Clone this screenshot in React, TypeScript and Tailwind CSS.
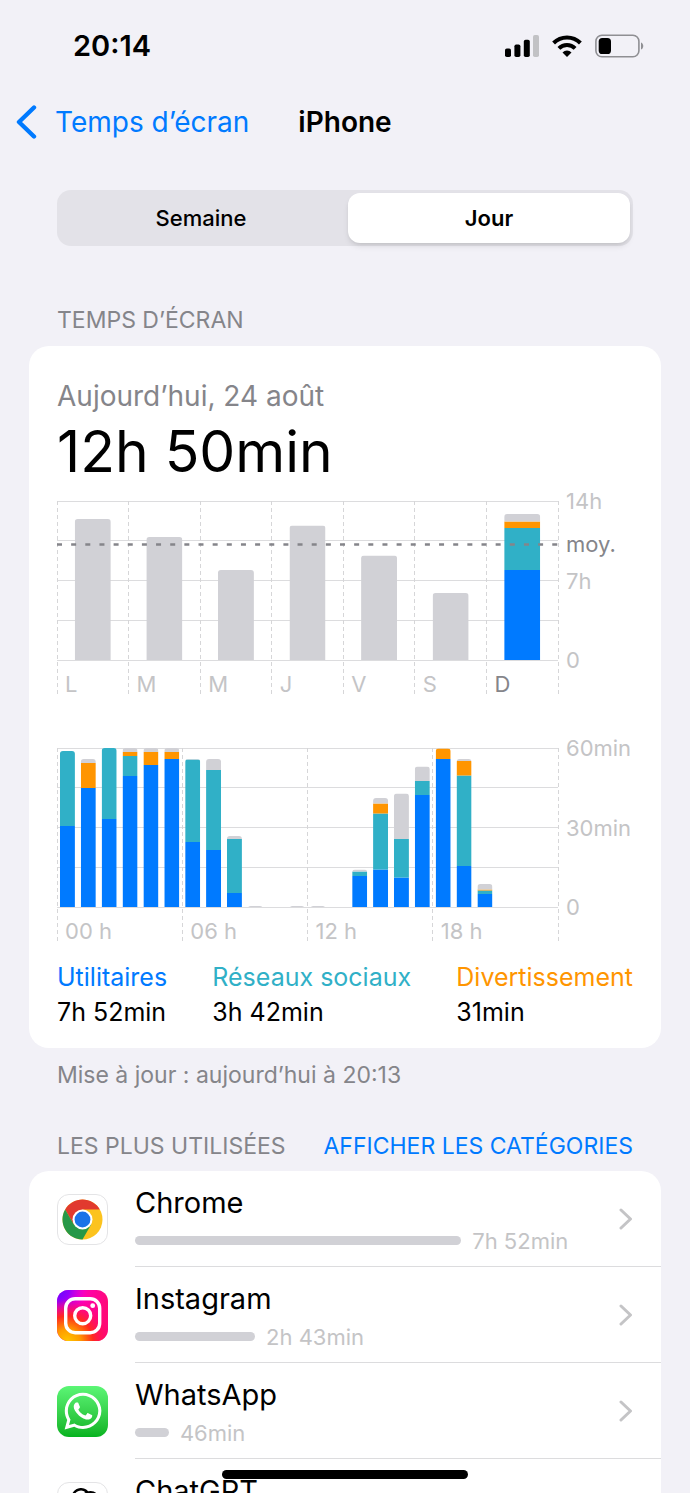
import { useState } from 'react'
import type { ReactNode } from 'react'
import { FaWhatsapp } from 'react-icons/fa'
import { SiOpenai } from 'react-icons/si'

const BLUE = '#007aff'
const TEAL = '#30b0c7'
const ORANGE = '#ff9500'
const GRAY = '#d1d1d6'

// utilities, social, entertainment, other
const SEGMENT_COLORS = [BLUE, TEAL, ORANGE, GRAY]

const PLOT_WIDTH = 501
const PLOT_TOP = 11
const PLOT_BOTTOM = 170

interface Bar {
  slot: number
  segments: number[]
}

const weekBars: Bar[] = [
  { slot: 0, segments: [0, 0, 0, 141] },
  { slot: 1, segments: [0, 0, 0, 123] },
  { slot: 2, segments: [0, 0, 0, 90] },
  { slot: 3, segments: [0, 0, 0, 134.5] },
  { slot: 4, segments: [0, 0, 0, 104.5] },
  { slot: 5, segments: [0, 0, 0, 67] },
  { slot: 6, segments: [90, 42, 6.5, 7.5] },
]

const hourBars: Bar[] = [
  { slot: 0, segments: [81, 75, 0, 0] },
  { slot: 1, segments: [119, 0, 25, 4] },
  { slot: 2, segments: [88, 71, 0, 0] },
  { slot: 3, segments: [131, 20, 4, 4] },
  { slot: 4, segments: [142, 0, 13, 4] },
  { slot: 5, segments: [148, 0, 7, 4] },
  { slot: 6, segments: [65, 82.5, 0, 0.5] },
  { slot: 7, segments: [57, 80, 0, 11] },
  { slot: 8, segments: [14, 54, 0, 3] },
  { slot: 9, segments: [0, 0, 0, 1] },
  { slot: 11, segments: [0, 0, 0, 1] },
  { slot: 12, segments: [0, 0, 0, 1] },
  { slot: 14, segments: [31, 4.5, 0, 2] },
  { slot: 15, segments: [37.5, 56, 10, 5.5] },
  { slot: 16, segments: [29.5, 38.5, 0, 45.5] },
  { slot: 17, segments: [112, 14, 0, 14.5] },
  { slot: 18, segments: [148, 0, 10.5, 0] },
  { slot: 19, segments: [41, 90.5, 14.5, 2] },
  { slot: 20, segments: [13, 3.5, 1, 5.5] },
]

const categories = [
  { name: 'Utilitaires', time: '7h 52min', color: 'text-[#007aff]' },
  { name: 'Réseaux sociaux', time: '3h 42min', color: 'text-[#30b0c7]' },
  { name: 'Divertissement', time: '31min', color: 'text-[#ff9500]' },
]

interface ChartProps {
  id: string
  label: string
  columns: string[]
  activeColumn?: number
  yLabels: string[]
  bars: Bar[]
  slots: number
  barWidth: number
  average?: number
}

function Chart({ id, label, columns, activeColumn, yLabels, bars, slots, barWidth, average }: ChartProps) {
  const columnWidth = PLOT_WIDTH / columns.length
  const slotWidth = PLOT_WIDTH / slots
  const rowHeight = (PLOT_BOTTOM - PLOT_TOP) / 4

  return (
    <svg viewBox="0 0 576 210" role="img" aria-label={label} className="block w-full overflow-visible text-[22px]">
      {[0, 1, 2, 3, 4].map((row) => (
        <line
          key={row}
          x1={0}
          x2={PLOT_WIDTH}
          y1={Math.floor(PLOT_TOP + row * rowHeight) + 0.5}
          y2={Math.floor(PLOT_TOP + row * rowHeight) + 0.5}
          stroke="#dcdcde"
        />
      ))}
      {[...columns, ''].map((_, i) => (
        <line
          key={i}
          x1={Math.floor(i * columnWidth) + 0.5}
          x2={Math.floor(i * columnWidth) + 0.5}
          y1={PLOT_TOP}
          y2={206}
          stroke="#d6d6d8"
          strokeDasharray="4 3"
        />
      ))}
      {bars.map(({ slot, segments }) => {
        const x = slot * slotWidth + (slotWidth - barWidth) / 2
        const height = segments.reduce((a, b) => a + b, 0)
        let y = PLOT_BOTTOM
        return (
          <g key={slot} clipPath={`url(#${id}-${slot})`}>
            <clipPath id={`${id}-${slot}`}>
              <rect x={x} y={PLOT_BOTTOM - height} width={barWidth} height={height + 8} rx={3} />
            </clipPath>
            {segments.map((h, i) => {
              y -= h
              return <rect key={i} x={x} y={y} width={barWidth} height={h} fill={SEGMENT_COLORS[i]} />
            })}
          </g>
        )
      })}
      {average !== undefined && (
        <line
          x1={0}
          x2={PLOT_WIDTH}
          y1={average}
          y2={average}
          stroke="#85858a"
          strokeWidth={2.6}
          strokeDasharray="5 9.15"
        />
      )}
      {columns.map((text, i) => (
        <text key={i} x={i * columnWidth + 8} y={202} fill={i === activeColumn ? '#85858a' : '#c4c4c6'}>
          {text}
        </text>
      ))}
      {yLabels.map((text, i) => (
        <text key={text} x={509} y={19 + i * 79.5} fill="#c4c4c6">
          {text}
        </text>
      ))}
      {average !== undefined && (
        <text x={509} y={62} fill="#85858a">
          moy.
        </text>
      )}
    </svg>
  )
}

function ChromeIcon() {
  return (
    <svg viewBox="0 0 51 51" className="size-[51px]" aria-hidden="true">
      <rect x="0.5" y="0.5" width="50" height="50" rx="11.5" fill="#fff" stroke="#e4e4e6" />
      <g transform="translate(25.5 25.5)">
        <circle r="20" fill="#fcc31e" />
        <path d="M-17.32-10A20 20 0 0 1 17.32-10L0-10L-8.66 5Z" fill="#e13a2e" />
        <path d="M-17.32-10A20 20 0 0 0 0 20L8.66 5L-8.66 5Z" fill="#279847" />
        <circle r="10" fill="#fff" />
        <circle r="7.9" fill="#1a73e8" />
      </g>
    </svg>
  )
}

function InstagramIcon() {
  return (
    <svg viewBox="0 0 51 51" className="size-[51px]" aria-hidden="true">
      <defs>
        <linearGradient id="ig-base" x1="0" y1="0" x2="1" y2="0.2">
          <stop offset="0" stopColor="#e800e0" />
          <stop offset="0.5" stopColor="#ff00b4" />
          <stop offset="1" stopColor="#ff0a78" />
        </linearGradient>
        <radialGradient id="ig-violet" cx="0" cy="0" r="0.6">
          <stop offset="0" stopColor="#5a0cff" />
          <stop offset="0.4" stopColor="#8a00ff" stopOpacity="0.9" />
          <stop offset="1" stopColor="#e000f0" stopOpacity="0" />
        </radialGradient>
        <radialGradient id="ig-warm" cx="0.2" cy="1.02" r="0.85">
          <stop offset="0" stopColor="#ffc800" />
          <stop offset="0.3" stopColor="#ff9a00" />
          <stop offset="0.6" stopColor="#ff2a1e" />
          <stop offset="1" stopColor="#ff0064" stopOpacity="0" />
        </radialGradient>
      </defs>
      <rect width="51" height="51" rx="11.5" fill="url(#ig-base)" />
      <rect width="51" height="51" rx="11.5" fill="url(#ig-violet)" />
      <rect width="51" height="51" rx="11.5" fill="url(#ig-warm)" />
      <g fill="none" stroke="#fff" strokeWidth="3.4">
        <rect x="8.7" y="8.7" width="34" height="34" rx="9.5" />
        <circle cx="25.7" cy="25.7" r="8" />
      </g>
      <circle cx="35.7" cy="15.7" r="2.4" fill="#fff" />
    </svg>
  )
}

function WhatsAppIcon() {
  return (
    <span className="flex size-[51px] items-center justify-center rounded-xl bg-linear-to-b from-[#5bf675] to-[#04b31f] text-white">
      <FaWhatsapp className="size-[42px]" />
    </span>
  )
}

function ChatGptIcon() {
  return (
    <span className="flex size-[51px] items-center justify-center rounded-xl border border-[#e4e4e6] bg-white text-black">
      <SiOpenai className="size-[38px]" />
    </span>
  )
}

interface AppUsage {
  name: string
  time: string
  share: number
  icon: ReactNode
}

const apps: AppUsage[] = [
  { name: 'Chrome', time: '7h 52min', share: 67.4, icon: <ChromeIcon /> },
  { name: 'Instagram', time: '2h 43min', share: 24.8, icon: <InstagramIcon /> },
  { name: 'WhatsApp', time: '46min', share: 7, icon: <WhatsAppIcon /> },
  { name: 'ChatGPT', time: '12min', share: 2, icon: <ChatGptIcon /> },
]

function AppRow({ app }: { app: AppUsage }) {
  return (
    <li>
      <a href="#" className="flex h-24 items-stretch gap-[27px] pl-7">
        <span className="flex items-center">{app.icon}</span>
        <span className="flex flex-1 items-center border-b border-[#dcdcde] pr-7">
          <span className="flex flex-1 flex-col gap-0.5 pt-1.5">
            <span className="text-[29px] leading-9 text-black">{app.name}</span>
            <span className="flex items-center gap-[11px]">
              <span className="h-[9px] rounded-full bg-[#d1d1d6]" style={{ width: `${app.share}%` }} />
              <span className="text-[22px] leading-9 text-[#c4c4c6]">{app.time}</span>
            </span>
          </span>
          <svg viewBox="0 0 14 22" className="h-[22px] w-3.5" fill="none" aria-hidden="true">
            <path d="M2 2L11.5 11L2 20" stroke="#c4c4c6" strokeWidth="3" strokeLinecap="round" strokeLinejoin="round" />
          </svg>
        </span>
      </a>
    </li>
  )
}

function StatusBar() {
  return (
    <div className="flex h-[92px] items-center justify-between pr-[46px] pl-[73px]">
      <span className="text-[29px] font-semibold">20:14</span>
      <div className="flex items-center gap-[13px]">
        <svg viewBox="0 0 34 22" className="h-[22px] w-[34px]" aria-hidden="true">
          <rect x="0" y="13.5" width="6" height="8.5" rx="1.8" />
          <rect x="9.4" y="9.5" width="6" height="12.5" rx="1.8" />
          <rect x="18.8" y="4.8" width="6" height="17.2" rx="1.8" />
          <rect x="28" y="0" width="6" height="22" rx="1.8" fill="#c2c2c5" />
        </svg>
        <svg viewBox="0 0 30 22" className="h-[22px] w-[30px]" aria-hidden="true">
          <g fill="none" stroke="#000" strokeWidth="4">
            <path d="M1.6 8A19 19 0 0 1 28.4 8" />
            <path d="M6.9 13.4A11.6 11.6 0 0 1 23.1 13.4" />
          </g>
          <path d="M15 22L10.5 17.4A6.4 6.4 0 0 1 19.5 17.4Z" />
        </svg>
        <svg viewBox="0 0 49 24" className="h-6 w-[49px]" aria-hidden="true">
          <rect x="0.9" y="1.2" width="43" height="21.6" rx="6" fill="none" stroke="#8f8f93" strokeWidth="1.6" />
          <path d="M46 8.5C49 9.5 49 14.5 46 15.5Z" fill="#8f8f93" />
          <rect x="3.7" y="4" width="12.3" height="16" rx="3.6" />
        </svg>
      </div>
    </div>
  )
}

export default function App() {
  const [period, setPeriod] = useState('Jour')

  return (
    <div className="h-screen overflow-hidden bg-[#f2f1f7] font-['Inter',sans-serif] text-black">
      <StatusBar />

      <nav className="grid h-[60px] grid-cols-[1fr_auto_1fr] items-center px-4">
        <a href="#" className="flex items-center gap-[18px] text-[28px] text-[#007aff]">
          <svg viewBox="0 0 21 34" className="h-[34px] w-[21px]" fill="none" aria-hidden="true">
            <path d="M18 2.5L3 17L18 31.5" stroke="currentColor" strokeWidth="4.4" strokeLinecap="round" strokeLinejoin="round" />
          </svg>
          Temps d’écran
        </a>
        <h1 className="text-[28px] font-semibold">iPhone</h1>
      </nav>

      <main className="px-[29px]">
        <div className="mx-7 mt-[38px] flex h-14 gap-1.5 rounded-[14px] bg-[#e3e2e8] p-[3px]">
          {['Semaine', 'Jour'].map((name) => (
            <button
              key={name}
              type="button"
              aria-pressed={period === name}
              onClick={() => setPeriod(name)}
              className={
                period === name
                  ? 'flex-1 rounded-xl bg-white text-[22px] font-semibold shadow-md'
                  : 'flex-1 text-[22px] font-medium'
              }
            >
              {name}
            </button>
          ))}
        </div>

        <h2 className="mt-[60px] px-7 text-[23px] leading-7 text-[#85858a]">TEMPS D’ÉCRAN</h2>
        <section className="mt-3 rounded-[20px] bg-white px-7 pt-8 pb-[18px]">
          <p className="text-[28px] leading-9 text-[#85858a]">Aujourd’hui, 24 août</p>
          <p className="mt-2 text-[57px] leading-[60px]">12h 50min</p>
          <div className="mt-2">
            <Chart
              id="week"
              label="Temps d’écran de la semaine"
              columns={['L', 'M', 'M', 'J', 'V', 'S', 'D']}
              activeColumn={6}
              yLabels={['14h', '7h', '0']}
              bars={weekBars}
              slots={7}
              barWidth={36}
              average={54.5}
            />
          </div>
          <div className="mt-[37px]">
            <Chart
              id="day"
              label="Temps d’écran par heure"
              columns={['00 h', '06 h', '12 h', '18 h']}
              yLabels={['60min', '30min', '0']}
              bars={hourBars}
              slots={24}
              barWidth={15}
            />
          </div>
          <dl className="mt-[13px] flex justify-between text-[25px] leading-[35px]">
            {categories.map((category) => (
              <div key={category.name}>
                <dt className={category.color}>{category.name}</dt>
                <dd>{category.time}</dd>
              </div>
            ))}
          </dl>
        </section>
        <p className="mt-[13px] px-7 text-[23px] leading-7 text-[#85858a]">Mise à jour : aujourd’hui à 20:13</p>

        <div className="mt-[43px] flex justify-between px-7 text-[23px] leading-7">
          <h2 className="text-[#85858a]">LES PLUS UTILISÉES</h2>
          <button type="button" className="text-[#007aff]">
            AFFICHER LES CATÉGORIES
          </button>
        </div>
        <ul className="mt-[11px] rounded-t-[20px] bg-white">
          {apps.map((app) => (
            <AppRow key={app.name} app={app} />
          ))}
        </ul>
      </main>

      <div className="fixed bottom-3.5 left-1/2 h-[9px] w-[246px] -translate-x-1/2 rounded-full bg-black" />
    </div>
  )
}
